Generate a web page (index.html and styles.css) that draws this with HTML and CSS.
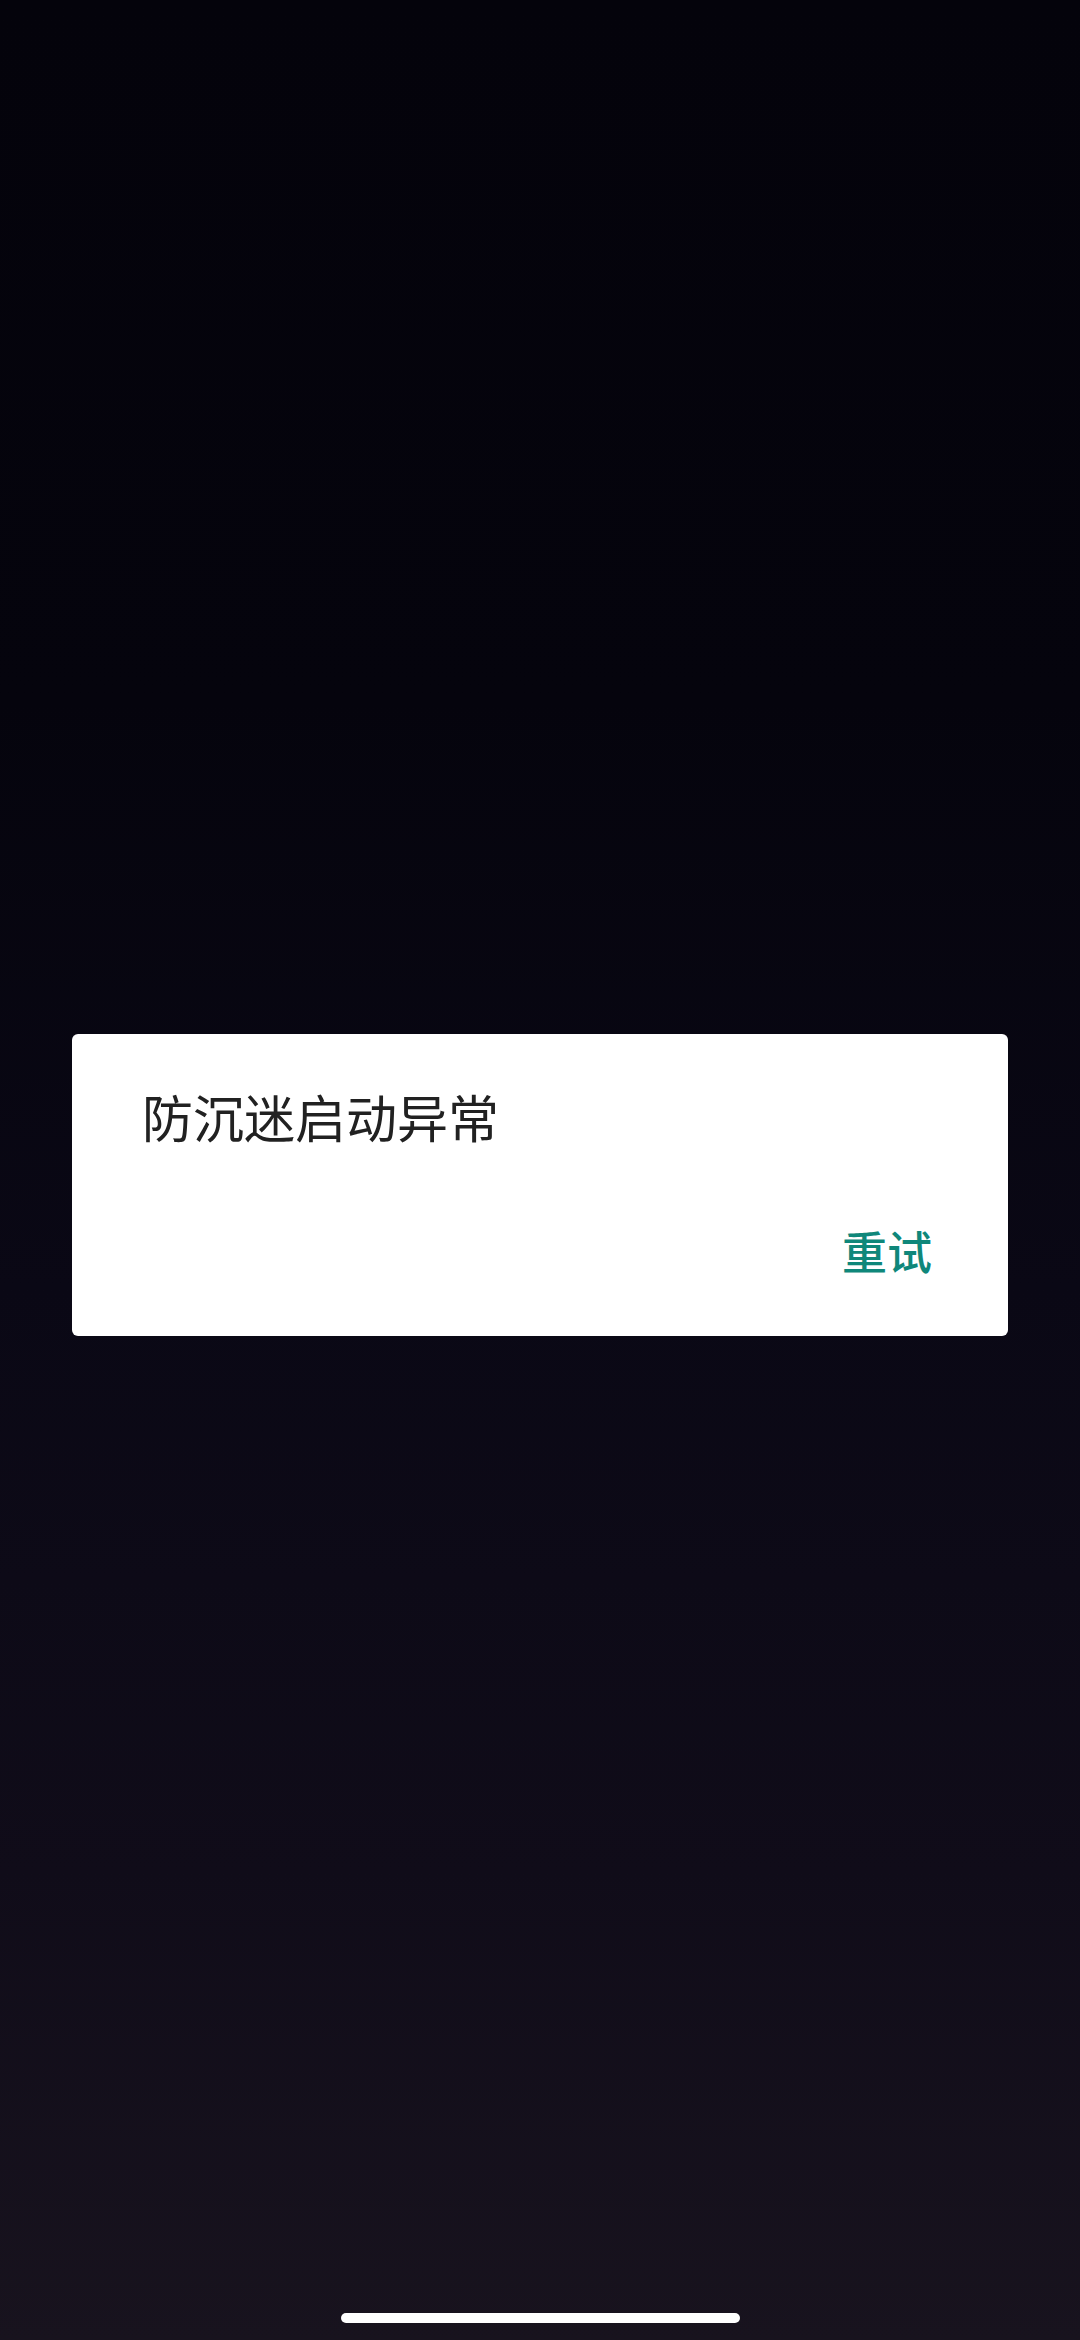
FILE: index.html
```html
<!DOCTYPE html>
<html>
<head>
    <title>防沉迷</title>
    <link rel="stylesheet" href="styles.css">
</head>
<body>
    <div class="screen">
        <div class="dialog">
            <div class="dialog-title">防沉迷启动异常</div>
            <div class="dialog-actions">
                <button class="btn-text">重试</button>
            </div>
        </div>
        <div class="home-bar"></div>
    </div>
</body>
</html>
```

FILE: styles.css
```css
body { margin: 0; font-family: "Noto Sans CJK SC", "Noto Sans", sans-serif; }
.screen { height: 2340px; display: flex; flex-direction: column; align-items: center; background: linear-gradient(180deg, #04030b 0%, #05040d 30%, #0a0815 55%, #100c19 80%, #18131e 100%); }
.dialog { width: 936px; box-sizing: border-box; margin-top: 1034px; padding: 57px 76px 63px 70px; background: #fff; border-radius: 6px; }
.dialog-title { font-size: 51px; line-height: 51px; color: #212121; }
.dialog-actions { display: flex; justify-content: flex-end; margin-top: 86px; }
.btn-text { font-family: inherit; font-size: 45px; line-height: 45px; font-weight: 500; color: #0f877a; background: none; border: none; padding: 0; }
.home-bar { margin-top: auto; margin-bottom: 17px; width: 399px; height: 10px; border-radius: 5px; background: #fff; }
```
